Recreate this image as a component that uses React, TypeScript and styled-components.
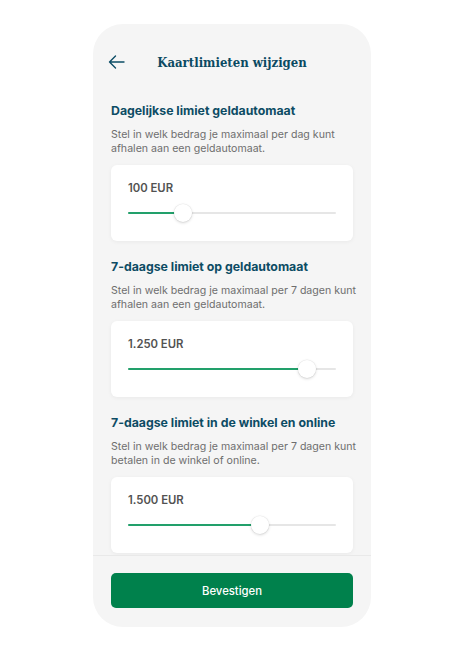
import React from 'react';
import styled, { createGlobalStyle } from 'styled-components';

const GlobalStyle = createGlobalStyle`
  html, body {
    margin: 0;
    padding: 0;
    background: #ffffff;
  }
  body {
    font-family: Inter, "Noto Sans", sans-serif;
    -webkit-font-smoothing: antialiased;
  }
`;

interface Limit {
  title: string;
  lines: string[];
  amount: string;
  value: number;
  max: number;
}

const limits: Limit[] = [
  {
    title: 'Dagelijkse limiet geldautomaat',
    lines: ['Stel in welk bedrag je maximaal per dag kunt', 'afhalen aan een geldautomaat.'],
    amount: '100 EUR',
    value: 26.4,
    max: 100,
  },
  {
    title: '7-daagse limiet op geldautomaat',
    lines: ['Stel in welk bedrag je maximaal per 7 dagen kunt', 'afhalen aan een geldautomaat.'],
    amount: '1.250 EUR',
    value: 86,
    max: 100,
  },
  {
    title: '7-daagse limiet in de winkel en online',
    lines: ['Stel in welk bedrag je maximaal per 7 dagen kunt', 'betalen in de winkel of online.'],
    amount: '1.500 EUR',
    value: 63.5,
    max: 100,
  },
];

const Page = styled.div`
  display: flex;
  justify-content: center;
  padding-top: 24px;
`;

const Phone = styled.div`
  width: 278px;
  height: 603px;
  background: #f5f5f5;
  border-radius: 30px;
  display: flex;
  flex-direction: column;
  overflow: hidden;
`;

const Header = styled.header`
  display: grid;
  grid-template-columns: 1fr auto 1fr;
  align-items: center;
  height: 24px;
  padding: 26px 15px 0;
`;

const BackButton = styled.button`
  all: unset;
  display: flex;
  align-items: center;
  width: 17px;
  height: 24px;
  color: #0d4d66;
  cursor: pointer;
`;

const Title = styled.h1`
  margin: 0;
  font-family: "DejaVu Serif Condensed", "DejaVu Serif", serif;
  font-stretch: condensed;
  font-size: 13px;
  font-weight: 700;
  color: #0b4a62;
`;

const Scroll = styled.main`
  flex: 1;
  overflow: hidden;
  padding: 28px 18px 0;
  display: flex;
  flex-direction: column;
  gap: 17px;
`;

const Section = styled.section`
  display: flex;
  flex-direction: column;
`;

const SectionTitle = styled.h2`
  margin: 0;
  font-size: 12.3px;
  line-height: 18px;
  font-weight: 700;
  color: #0d4c64;
`;

const Description = styled.p`
  margin: 8px 0 0;
  font-size: 10.6px;
  line-height: 14px;
  color: #6e6e6e;
  white-space: nowrap;
`;

const Line = styled.span`
  display: block;
`;

const Card = styled.div`
  margin-top: 9px;
  background: #ffffff;
  border-radius: 6px;
  box-shadow: 0 1px 4px rgba(0, 0, 0, 0.05);
  padding: 16px 17px 18px;
`;

const Amount = styled.div`
  font-size: 11.3px;
  line-height: 14px;
  font-weight: 600;
  color: #525252;
`;

const SliderWrap = styled.div`
  position: relative;
  margin-top: 8px;
  height: 20px;
`;

const Track = styled.div`
  position: absolute;
  left: 0;
  right: 0;
  top: 9px;
  height: 2px;
  background: #e6e6e6;
  border-radius: 1px;
`;

const Fill = styled.div`
  position: absolute;
  left: 0;
  top: 9px;
  height: 2px;
  background: #22a06b;
  border-radius: 1px;
`;

const Thumb = styled.div`
  position: absolute;
  top: 1px;
  width: 18px;
  height: 18px;
  margin-left: -9px;
  border-radius: 50%;
  background: #ffffff;
  box-shadow: 0 1px 3px rgba(0, 0, 0, 0.16), 0 0 0 0.5px rgba(0, 0, 0, 0.06);
`;

const Footer = styled.footer`
  border-top: 1px solid #e9e9e9;
  padding: 17px 18px 19px;
`;

const ConfirmButton = styled.button`
  all: unset;
  box-sizing: border-box;
  width: 100%;
  height: 35px;
  border-radius: 5px;
  background: #00814c;
  color: #ffffff;
  font-family: Inter, "Noto Sans", sans-serif;
  font-size: 11.3px;
  font-weight: 500;
  display: flex;
  align-items: center;
  justify-content: center;
  cursor: pointer;
`;

const Slider = ({ value, max }: { value: number; max: number }) => {
  const pct = (value / max) * 100;
  return (
    <SliderWrap>
      <Track />
      <Fill style={{ width: `${pct}%` }} />
      <Thumb style={{ left: `${pct}%` }} />
    </SliderWrap>
  );
};

export default function App() {
  return (
    <>
      <GlobalStyle />
      <Page>
        <Phone>
          <Header>
            <BackButton aria-label="Terug">
              <svg width="17" height="14" viewBox="0 0 17 14" fill="none">
                <path d="M16 7H1.5M7.5 1L1.5 7l6 6" stroke="currentColor" strokeWidth="1.4" strokeLinecap="round" strokeLinejoin="round" />
              </svg>
            </BackButton>
            <Title>Kaartlimieten wijzigen</Title>
            <span />
          </Header>
          <Scroll>
            {limits.map((l) => (
              <Section key={l.title}>
                <SectionTitle>{l.title}</SectionTitle>
                <Description>
                  {l.lines.map((t) => (
                    <Line key={t}>{t}</Line>
                  ))}
                </Description>
                <Card>
                  <Amount>{l.amount}</Amount>
                  <Slider value={l.value} max={l.max} />
                </Card>
              </Section>
            ))}
          </Scroll>
          <Footer>
            <ConfirmButton>Bevestigen</ConfirmButton>
          </Footer>
        </Phone>
      </Page>
    </>
  );
}
